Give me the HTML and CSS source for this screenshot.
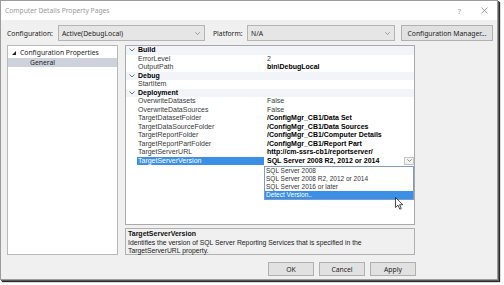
FILE: index.html
```html
<!DOCTYPE html>
<html>
<head>
<meta charset="utf-8">
<link rel="stylesheet" href="styles.css">
</head>
<body>
<div class="window">
  <div class="titlebar">
    <span class="title">Computer Details Property Pages</span>
    <span class="help">?</span>
    <svg class="close" width="7" height="7" viewBox="0 0 7 7"><path d="M0.5 0.5L6.5 6.5M6.5 0.5L0.5 6.5" stroke="#8a8a8a" stroke-width="0.8" fill="none"/></svg>
  </div>
  <div class="toolbar">
    <span class="lbl lbl-config">Configuration:</span>
    <div class="select sel-config"><span>Active(DebugLocal)</span><svg class="chev" width="5" height="3" viewBox="0 0 5 3"><path d="M0.3 0.3L2.5 2.5L4.7 0.3" stroke="#777" stroke-width="0.7" fill="none"/></svg></div>
    <span class="lbl lbl-platform">Platform:</span>
    <div class="select sel-platform"><span>N/A</span><svg class="chev" width="5" height="3" viewBox="0 0 5 3"><path d="M0.3 0.3L2.5 2.5L4.7 0.3" stroke="#777" stroke-width="0.7" fill="none"/></svg></div>
    <button class="btn btn-cfg">Configuration Manager...</button>
  </div>
  <div class="body">
    <div class="main">
      <div class="tree">
        <div class="tree-item root"><svg class="tri" width="4" height="4" viewBox="0 0 4 4"><polygon points="0,4 4,4 4,0" fill="#222"/></svg><span>Configuration Properties</span></div>
        <div class="tree-item child selected"><span>General</span></div>
      </div>
      <div class="rightcol">
        <div class="grid">
          <div class="row cat"><span class="m"><svg width="6" height="4" viewBox="0 0 6 4"><path d="M0.5 0.5L3 3L5.5 0.5" stroke="#555" stroke-width="0.8" fill="none"/></svg></span><span class="n">Build</span><span class="v"></span></div>
          <div class="row"><span class="m"></span><span class="n">ErrorLevel</span><span class="v">2</span></div>
          <div class="row"><span class="m"></span><span class="n">OutputPath</span><span class="v b">bin\DebugLocal</span></div>
          <div class="row cat"><span class="m"><svg width="6" height="4" viewBox="0 0 6 4"><path d="M0.5 0.5L3 3L5.5 0.5" stroke="#555" stroke-width="0.8" fill="none"/></svg></span><span class="n">Debug</span><span class="v"></span></div>
          <div class="row"><span class="m"></span><span class="n">StartItem</span><span class="v"></span></div>
          <div class="row cat"><span class="m"><svg width="6" height="4" viewBox="0 0 6 4"><path d="M0.5 0.5L3 3L5.5 0.5" stroke="#555" stroke-width="0.8" fill="none"/></svg></span><span class="n">Deployment</span><span class="v"></span></div>
          <div class="row"><span class="m"></span><span class="n">OverwriteDatasets</span><span class="v">False</span></div>
          <div class="row"><span class="m"></span><span class="n">OverwriteDataSources</span><span class="v">False</span></div>
          <div class="row"><span class="m"></span><span class="n">TargetDatasetFolder</span><span class="v b">/ConfigMgr_CB1/Data Set</span></div>
          <div class="row"><span class="m"></span><span class="n">TargetDataSourceFolder</span><span class="v b">/ConfigMgr_CB1/Data Sources</span></div>
          <div class="row"><span class="m"></span><span class="n">TargetReportFolder</span><span class="v b">/ConfigMgr_CB1/Computer Details</span></div>
          <div class="row"><span class="m"></span><span class="n">TargetReportPartFolder</span><span class="v b">/ConfigMgr_CB1/Report Part</span></div>
          <div class="row"><span class="m"></span><span class="n">TargetServerURL</span><span class="v b">http://cm-ssrs-cb1/reportserver/</span></div>
          <div class="row sel"><span class="m"></span><span class="n">TargetServerVersion</span><span class="v b combo"><span>SQL Server 2008 R2, 2012 or 2014</span><span class="dd"><svg width="5" height="3" viewBox="0 0 5 3"><path d="M0.3 0.3L2.5 2.5L4.7 0.3" stroke="#666" stroke-width="0.7" fill="none"/></svg></span></span></div>
          <div class="droplist">
            <div class="opt">SQL Server 2008</div>
            <div class="opt">SQL Server 2008 R2, 2012 or 2014</div>
            <div class="opt">SQL Server 2016 or later</div>
            <div class="opt hl">Detect Version..</div>
          </div>
        </div>
        <div class="desc">
          <div class="desc-title">TargetServerVersion</div>
          <div class="desc-text">Identifies the version of SQL Server Reporting Services that is specified in the TargetServerURL property.</div>
        </div>
      </div>
    </div>
    <div class="buttons">
      <button class="btn dlg">OK</button>
      <button class="btn dlg">Cancel</button>
      <button class="btn dlg">Apply</button>
    </div>
  </div>
  <svg class="cursor" width="9" height="13" viewBox="0 0 9 13"><path d="M0.5 0.5L0.5 10.5L3 8.2L4.8 12.2L6.3 11.5L4.6 7.7L7.8 7.7Z" fill="#fff" stroke="#000" stroke-width="0.7" stroke-linejoin="round"/></svg>
</div>
</body>
</html>
```
FILE: styles.css
```css
html, body {
  margin: 0;
  padding: 0;
  background: #ffffff;
}
body {
  width: 504px;
  height: 285px;
  overflow: hidden;
  font-family: "Noto Sans", "Liberation Sans", sans-serif;
}
.window {
  position: relative;
  width: 498px;
  height: 280px;
  box-sizing: border-box;
  border: 1px solid #9c9c9c;
  background: #f0f0f0;
  box-shadow: 1px 1px 0 #5a5a5a, 2px 2px 1px #2a2a2a;
}
.titlebar {
  height: 19px;
  background: #ffffff;
  display: flex;
  align-items: center;
  padding-left: 4px;
  font-size: 6.7px;
  color: #9a9a9a;
}
.title {
  flex: 1;
}
.help {
  margin-right: 20px;
  color: #a0a0a0;
  font-size: 7.4px;
}
.close {
  margin-right: 9px;
}
.toolbar {
  display: flex;
  align-items: center;
  height: 16px;
  margin-top: 5px;
  padding-left: 6px;
  font-size: 6.8px;
  color: #222;
}
.lbl-config {
  width: 51px;
}
.lbl-platform {
  width: 34px;
  margin-left: 8px;
}
.select {
  height: 16px;
  box-sizing: border-box;
  border: 1px solid #b4b4b4;
  background: #e6e6e6;
  display: flex;
  align-items: center;
  justify-content: space-between;
  padding: 0 4px 0 3px;
  color: #222;
}
.sel-config {
  width: 147px;
}
.sel-platform {
  width: 148px;
}
.btn {
  font-family: "Noto Sans", "Liberation Sans", sans-serif;
  font-size: 6.8px;
  color: #222;
  background: #e1e1e1;
  border: 1px solid #b0b0b0;
  box-sizing: border-box;
  padding: 0;
  margin: 0;
}
.btn-cfg {
  width: 92px;
  height: 16px;
  margin-left: 6px;
}
.body {
  width: 415px;
}
.main {
  display: flex;
  gap: 7px;
  margin-top: 4px;
  padding-left: 6px;
}
.tree {
  width: 111px;
  height: 210px;
  box-sizing: border-box;
  border: 1px solid #b9b9b9;
  background: #ffffff;
  padding-top: 2px;
  font-size: 6.8px;
  color: #222;
}
.tree-item {
  height: 9.5px;
  display: flex;
  align-items: center;
}
.tree-item.root {
  padding-left: 4px;
}
.tri {
  margin-right: 4px;
}
.tree-item.child {
  padding-left: 22px;
}
.tree-item.selected {
  background: #cdd2dc;
}
.rightcol {
  width: 290px;
  display: flex;
  flex-direction: column;
}
.grid {
  position: relative;
  height: 180px;
  box-sizing: border-box;
  border: 1px solid #a9a9a9;
  background: #ffffff;
  font-family: "Liberation Sans", Arial, sans-serif;
  font-size: 7px;
  color: #3a3a3a;
}
.row {
  display: grid;
  grid-template-columns: 11px 127px 1fr;
  height: 8.5px;
  line-height: 8.5px;
  white-space: nowrap;
}
.row .m {
  display: flex;
  align-items: center;
  justify-content: center;
}
.row .n {
  padding-left: 1px;
  overflow: hidden;
}
.row .v {
  padding-left: 3px;
  overflow: hidden;
}
.row .b {
  font-weight: bold;
  color: #000;
}
.row.cat {
  background: #f1f4f9;
}
.row.cat .n {
  font-weight: bold;
  color: #000;
}
.row.sel .n {
  background: #3b8fe5;
  color: #ffffff;
}
.combo {
  display: flex;
  justify-content: space-between;
  align-items: center;
}
.dd {
  width: 10px;
  height: 8px;
  box-sizing: border-box;
  border: 1px solid #c4c4c4;
  background: #f3f3f3;
  display: flex;
  align-items: center;
  justify-content: center;
}
.droplist {
  position: absolute;
  left: 138px;
  top: 120px;
  width: 150px;
  box-sizing: border-box;
  border: 1px solid #7d9bc8;
  background: #ffffff;
  font-size: 6.5px;
  color: #333;
}
.opt {
  height: 8px;
  line-height: 8px;
  padding-left: 1px;
}
.opt.hl {
  background: #3b8fe5;
  color: #ffffff;
}
.desc {
  margin-top: 3px;
  height: 27px;
  box-sizing: border-box;
  border: 1px solid #b0b0b0;
  background: #f0f0f0;
  padding: 1px 2px;
  font-family: "Liberation Sans", Arial, sans-serif;
  color: #222;
}
.desc-title {
  font-weight: bold;
  font-size: 7px;
  line-height: 8.5px;
  color: #111;
}
.desc-text {
  font-size: 6.8px;
  line-height: 8.5px;
  max-width: 245px;
}
.buttons {
  display: flex;
  justify-content: flex-end;
  gap: 5px;
  margin-top: 7px;
}
.btn.dlg {
  width: 46px;
  height: 14px;
}
.cursor {
  position: absolute;
  left: 394px;
  top: 196px;
}
```
